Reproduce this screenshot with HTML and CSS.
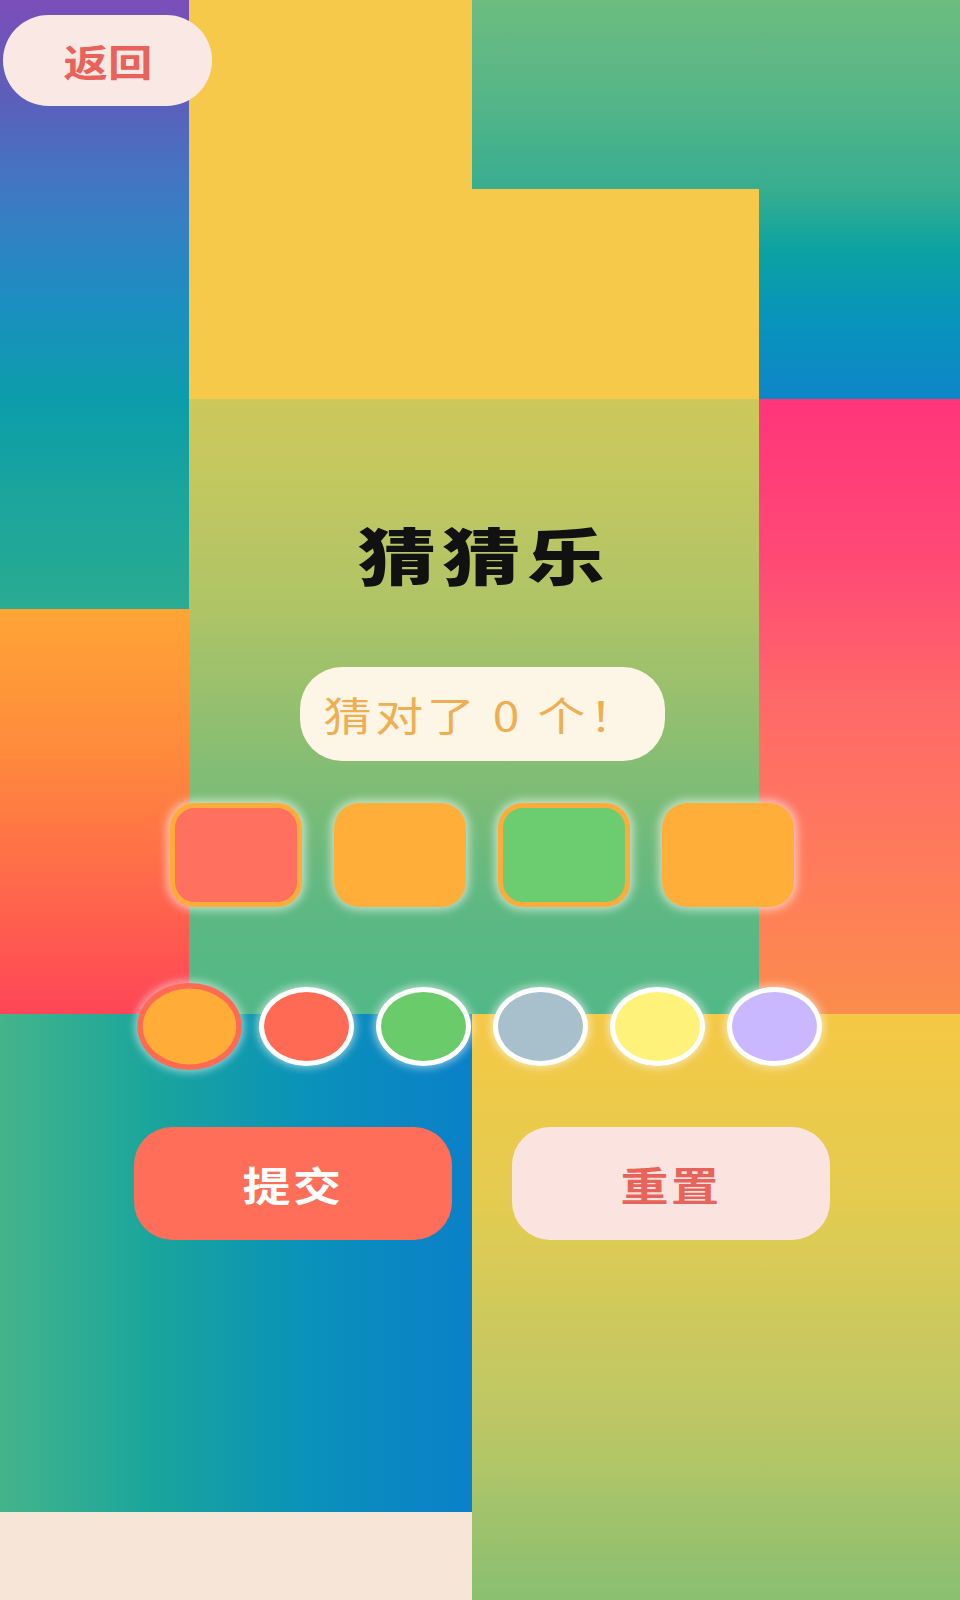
FILE: index.html
```html
<!DOCTYPE html>
<html lang="zh-CN">
<head>
<meta charset="utf-8">
<title>猜猜乐</title>
<link rel="stylesheet" href="styles.css">
</head>
<body>
<div class="page">
  <div class="backdrop">
    <div class="blk blk-a"></div>
    <div class="blk blk-c"></div>
    <div class="blk blk-b1"></div>
    <div class="blk blk-b2"></div>
    <div class="blk blk-d"></div>
    <div class="blk blk-e"></div>
    <div class="blk blk-f"></div>
    <div class="blk blk-g"></div>
    <div class="blk blk-h"></div>
    <div class="blk blk-i"></div>
  </div>
  <div class="content">
    <div class="topbar">
      <button class="back-btn"><span class="wide">返回</span></button>
    </div>
    <main class="game">
      <h1 class="title"><span class="wide title-text">猜猜乐</span></h1>
      <div class="status"><span class="wide">猜对了 0 个！</span></div>
      <div class="slots">
        <div class="slot slot-coral marked"></div>
        <div class="slot slot-orange"></div>
        <div class="slot slot-green marked"></div>
        <div class="slot slot-orange"></div>
      </div>
      <div class="palette">
        <div class="dot dot-orange selected"></div>
        <div class="dot dot-coral"></div>
        <div class="dot dot-green"></div>
        <div class="dot dot-gray"></div>
        <div class="dot dot-yellow"></div>
        <div class="dot dot-purple"></div>
      </div>
      <div class="actions">
        <button class="btn btn-submit"><span class="wide">提交</span></button>
        <button class="btn btn-reset"><span class="wide">重置</span></button>
      </div>
    </main>
  </div>
</div>
</body>
</html>
```

FILE: styles.css
```css
* { box-sizing: border-box; }
html, body { margin: 0; padding: 0; }
body {
  width: 960px;
  height: 1600px;
  overflow: hidden;
  font-family: "Noto Sans CJK SC", "Noto Sans", sans-serif;
}
.page {
  display: grid;
  width: 960px;
  height: 1600px;
}
.backdrop, .content { grid-area: 1 / 1; }

.backdrop {
  display: grid;
  grid-template-columns: 189px 283px 287px 201px;
  grid-template-rows: 189px 210px 210px 405px 498px 88px;
}
.blk-a {
  grid-column: 1; grid-row: 1 / 4;
  background: linear-gradient(180deg, #7b4db8 0%, #5a60bb 17%, #3c7bc4 33%, #1b8fc0 50%, #0c9daa 66%, #1ba59c 82%, #2aab92 100%);
}
.blk-c {
  grid-column: 3 / 5; grid-row: 1 / 3;
  background: linear-gradient(180deg, #6dbc80 0%, #55b588 25%, #38ae8f 47%, #0ba2a2 63%, #0894bc 80%, #0d86c8 100%);
}
.blk-b1 { grid-column: 2; grid-row: 1 / 3; background: #f7c94a; }
.blk-b2 { grid-column: 3; grid-row: 2; background: #f7c94a; }
.blk-d {
  grid-column: 2 / 4; grid-row: 3 / 5;
  background: linear-gradient(180deg, #cdc95a 0%, #c0c761 16%, #b0c466 33%, #96c06e 49%, #80bd75 62%, #5eb882 82%, #52b888 100%);
}
.blk-e {
  grid-column: 4; grid-row: 3 / 5;
  background: linear-gradient(180deg, #ff357a 0%, #ff4876 25%, #ff6a68 50%, #ff7a5c 74%, #fb8c4c 100%);
}
.blk-f {
  grid-column: 1; grid-row: 4;
  background: linear-gradient(180deg, #ffa535 0%, #ff8a3c 35%, #ff6a4a 67%, #ff4558 100%);
}
.blk-g {
  grid-column: 1 / 3; grid-row: 5;
  background: linear-gradient(90deg, #44b48b 0%, #1aa59c 32%, #0a92b9 64%, #0a80c9 100%);
}
.blk-h { grid-column: 1 / 3; grid-row: 6; background: #f7e5d8; }
.blk-i {
  grid-column: 3 / 5; grid-row: 5 / 7;
  background: linear-gradient(180deg, #f5c845 0%, #e3cc50 32%, #c8c860 58%, #b5c666 75%, #9fc26c 86%, #8ac070 100%);
}

.content {
  display: flex;
  flex-direction: column;
}
.wide {
  display: inline-block;
  transform: scaleX(1.2);
}
.topbar {
  padding: 15px 0 0 3px;
}
button {
  font-family: inherit;
  border: none;
  cursor: pointer;
  padding: 0;
  display: flex;
  align-items: center;
  justify-content: center;
}
.back-btn {
  width: 209px;
  height: 91px;
  border-radius: 46px;
  background: #fae8e5;
  color: #e8625a;
  font-size: 37px;
  font-weight: 700;
}

.game {
  display: flex;
  flex-direction: column;
  align-items: center;
  padding-left: 4px;
}
.title {
  margin: 417px 0 0;
  font-size: 62px;
  line-height: 62px;
  height: 62px;
  font-weight: 900;
  letter-spacing: 5px;
  padding-left: 5px;
  color: #111;
  display: flex;
  justify-content: center;
}
.title .title-text {
  transform: scaleX(1.26);
}
.status {
  margin-top: 82px;
  width: 365px;
  height: 94px;
  border-radius: 42px;
  background: #fdf6e6;
  color: #f0ae52;
  font-size: 40px;
  letter-spacing: 3px;
  display: flex;
  align-items: center;
  justify-content: center;
}
.slots {
  margin-top: 42px;
  display: flex;
  gap: 32px;
}
.slot {
  width: 132px;
  height: 104px;
  border-radius: 25px;
  box-shadow: 0 0 10px 3px rgba(255, 255, 255, 0.6);
}
.slot.marked { border: 5px solid #ffab3a; }
.slot-coral { background: #ff705e; }
.slot-orange { background: #ffae3a; }
.slot-green { background: #6ccd70; }

.palette {
  margin-top: 80px;
  display: flex;
  gap: 22px;
}
.dot {
  width: 95px;
  height: 79px;
  border-radius: 50%;
  border: 5px solid #ffffff;
  box-shadow: 0 0 8px 2px rgba(255, 255, 255, 0.55);
}
.dot.selected {
  border-color: #ff6a52;
  transform: scale(1.1);
}
.dot-orange { background: #ffad38; }
.dot-coral { background: #ff6a55; }
.dot-green { background: #6acb6a; }
.dot-gray { background: #a8bfcc; }
.dot-yellow { background: #fff27a; }
.dot-purple { background: #c9b8ff; }

.actions {
  margin-top: 61px;
  display: flex;
  gap: 60px;
}
.btn {
  width: 318px;
  height: 113px;
  border-radius: 38px;
  font-size: 40px;
  font-weight: 700;
  letter-spacing: 2px;
}
.btn-submit { background: #ff6e58; color: #ffffff; }
.btn-reset { background: #fbe4e0; color: #e8645a; }
```
